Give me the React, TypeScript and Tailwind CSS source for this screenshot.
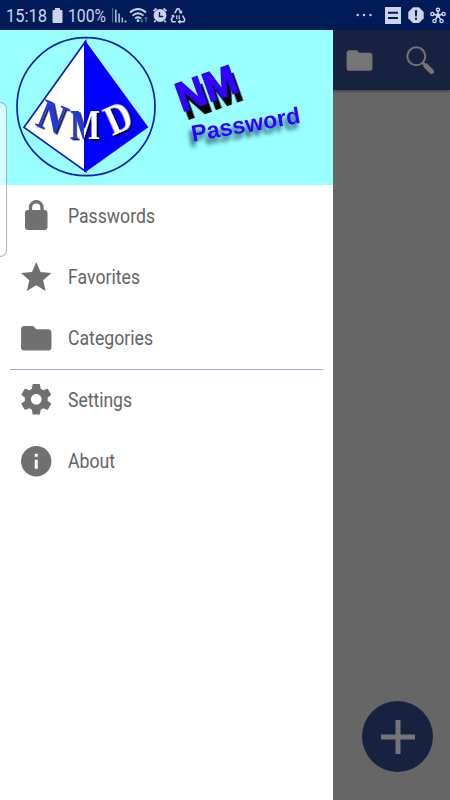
import type { ReactNode } from 'react'

const LOCK = 'M17.400 8.500h-.5V6.900a4.900 4.900 0 0 0-9.800 0v1.600h-.5a2 2 0 0 0-2 2v9.200a2 2 0 0 0 2 2h10.800a2 2 0 0 0 2-2v-9.200a2 2 0 0 0-2-2zM9.300 8.500V6.900a2.700 2.700 0 0 1 5.400 0v1.600z'
const STAR = 'M12 17.27 18.18 21l-1.64-7.03L22 9.24l-7.19-.61L12 2 9.19 8.63 2 9.24l5.46 4.73L5.82 21z'
const FOLDER = 'M10 4H4c-1.1 0-1.99.9-1.99 2L2 18c0 1.1.9 2 2 2h16c1.1 0 2-.9 2-2V8c0-1.1-.9-2-2-2h-8l-2-2z'
const INFO = 'M12 2C6.48 2 2 6.48 2 12s4.48 10 10 10 10-4.48 10-10S17.52 2 12 2zm1 15h-2v-6h2v6zm0-8h-2V7h2v2z'
const GEAR =
  'M19.43 12.98c.04-.32.07-.64.07-.98s-.03-.66-.07-.98l2.11-1.65c.19-.15.24-.42.12-.64l-2-3.46c-.12-.22-.39-.3-.61-.22l-2.49 1c-.52-.4-1.08-.73-1.69-.98l-.38-2.65C14.46 2.18 14.25 2 14 2h-4c-.25 0-.46.18-.49.42l-.38 2.65c-.61.25-1.17.59-1.69.98l-2.49-1c-.23-.09-.49 0-.61.22l-2 3.46c-.13.22-.07.49.12.64l2.11 1.65c-.04.32-.07.65-.07.98s.03.66.07.98l-2.11 1.65c-.19.15-.24.42-.12.64l2 3.46c.12.22.39.3.61.22l2.49-1c.52.4 1.08.73 1.69.98l.38 2.65c.03.24.24.42.49.42h4c.25 0 .46-.18.49-.42l.38-2.65c.61-.25 1.17-.59 1.69-.98l2.49 1c.23.09.49 0 .61-.22l2-3.46c.12-.22.07-.49-.12-.64l-2.11-1.65zM12 15.5c-1.93 0-3.5-1.57-3.5-3.5s1.57-3.5 3.5-3.5 3.5 1.57 3.5 3.5-1.57 3.5-3.5 3.5z'

const mainItems = [
  { label: 'Passwords', icon: LOCK, width: 87 },
  { label: 'Favorites', icon: STAR, width: 72 },
  { label: 'Categories', icon: FOLDER, width: 85 },
]

const moreItems = [
  { label: 'Settings', icon: GEAR, width: 64 },
  { label: 'About', icon: INFO, width: 47 },
]

// Roboto squeezed to the condensed width
function Label({ text, width, className }: { text: string; width: number; className: string }) {
  return (
    <svg width={width} height="28" className={`shrink-0 overflow-visible ${className}`}>
      <text x="0" y="21" textLength={width} lengthAdjust="spacingAndGlyphs" fill="currentColor">
        {text}
      </text>
    </svg>
  )
}

function MenuItem({ label, icon, width }: { label: string; icon: string; width: number }) {
  return (
    <li className="flex h-[61.3px] items-center pl-[18px]">
      <svg viewBox="0 0 24 24" className="size-[36.5px] shrink-0 fill-[#707070]">
        <path d={icon} />
      </svg>
      <Label text={label} width={width} className="ml-[13px] text-[20px] text-[#646464]" />
    </li>
  )
}

function StatusIcon({ width, children }: { width: number; children: ReactNode }) {
  return (
    <svg width={width} height="20" viewBox={`0 0 ${width} 20`} className="shrink-0" fill="#cdd3e8" stroke="none">
      {children}
    </svg>
  )
}

function StatusBar() {
  return (
    <header className="flex h-[30px] items-center justify-between bg-[#001b58] pr-[4px] pl-[6px]">
      <div className="flex items-center">
        <Label text="15:18" width={41} className="text-[19px] text-[#cdd3e8]" />
        <div className="ml-[5px] flex">
          <StatusIcon width={11}>
            <path d="M3 3h5v2h1.500q1 0 1 1v11q0 1-1 1h-8q-1 0-1-1V6q0-1 1-1H3z" />
          </StatusIcon>
        </div>
        <Label text="100%" width={38} className="ml-[5px] text-[19px] text-[#cdd3e8]" />
        <div className="ml-[6px] flex">
          <StatusIcon width={17}>
            <path d="M0 3h1.200v14.500H0z" opacity=".4" />
            <path d="M3 4.500h1.600v13H3zM6.300 8.500h1.600v9H6.300zM9.500 12.500h1.600v5H9.500zM12.500 15.500h2v2h-2z" opacity=".85" />
          </StatusIcon>
          <StatusIcon width={23}>
            <g fill="none" stroke="#cdd3e8" strokeWidth="1.800">
              <path d="M1 7.500q8-7 16 0M3.500 10.600q5.500-4.800 11 0M6.200 13.500q2.800-2.400 5.600 0" />
            </g>
            <circle cx="9" cy="15.700" r="1.400" />
            <path d="M12.800 12.500v4.700m-1.500-1.600 1.500 1.600 1.500-1.600M17 17.200v-5m-1.500 1.600 1.500-1.600 1.500 1.600" fill="none" stroke="#6979aa" />
          </StatusIcon>
          <StatusIcon width={18}>
            <circle cx="8" cy="10.500" r="6.400" />
            <path d="m1.500 6.200 3-2.700M11.500 3.500l3 2.700M3.500 15.500l-1.200 1.700M12.500 15.500l1.200 1.700" stroke="#cdd3e8" strokeWidth="1.700" />
            <path d="M7.500 7v4.500h3.700" fill="none" stroke="#001b58" strokeWidth="1.400" />
          </StatusIcon>
          <StatusIcon width={17}>
            <g fill="none" stroke="#cdd3e8" strokeWidth="1.500">
              <path d="m4.800 8.200 2.400-4.400h1.600l2.300 4M3.300 11l-2 3.600 1 2.100h3.500M12.500 10.500l2.300 4.100-1 2.100H8.500" />
              <path d="m9.200 7.300 2.200.6.500-2.200M1.500 11l2-.7.700 2M10.300 15l-1.800 1.700 1.800 1.600" strokeWidth="1.200" />
              <path d="M6.800 14.300v-4M9.200 10.300v4" strokeWidth="1.200" />
            </g>
          </StatusIcon>
        </div>
      </div>
      <div className="flex items-center">
        <StatusIcon width={30}>
          <circle cx="2.700" cy="10" r="1.200" />
          <circle cx="9" cy="10" r="1.200" />
          <circle cx="15.500" cy="10" r="1.200" />
        </StatusIcon>
        <StatusIcon width={23}>
          <path d="M0 2h16v17H0zM3 6.700v2h10v-2zM3 12v2h10v-2z" fillRule="evenodd" />
        </StatusIcon>
        <StatusIcon width={22}>
          <path d="M5 2.200h6l4.700 4.700v6.300L11 18H5L.3 13.200V6.900z" />
          <path d="M6.800 5.300h2.400l-.4 6.200H7.200zM7 12.700h2v2H7z" fill="#001b58" />
        </StatusIcon>
        <StatusIcon width={16}>
          <g fill="none" stroke="#cdd3e8" strokeWidth="1.400">
            <path d="M8 10.500V5M8 10.500 3 9M8 10.500 13 9M8 10.500l-3 4.500M8 10.500l3 4.500" />
            <circle cx="8" cy="4.800" r="1.600" />
            <circle cx="2.400" cy="9" r="1.600" />
            <circle cx="13.600" cy="9" r="1.600" />
            <circle cx="4.500" cy="16" r="1.600" />
            <circle cx="11.500" cy="16" r="1.600" />
          </g>
          <circle cx="8" cy="10.500" r="2.200" />
        </StatusIcon>
      </div>
    </header>
  )
}

function PyramidLogo() {
  return (
    <svg
      viewBox="0 0 510 465"
      className="h-[155px] w-[170px] shrink-0 font-['Liberation_Serif',serif] text-[128px] font-bold"
    >
      <defs>
        <linearGradient id="split" gradientUnits="userSpaceOnUse" x1="210" x2="302" y1="0" y2="0">
          <stop offset=".47" stopColor="#2337dc" />
          <stop offset=".47" stopColor="#fff" />
        </linearGradient>
        <filter id="letterShadow" x="-20%" y="-20%" width="150%" height="150%">
          <feDropShadow dx="5" dy="4" stdDeviation="2" floodColor="#000" floodOpacity=".9" />
        </filter>
      </defs>
      <circle cx="258" cy="230" r="207" fill="none" stroke="#0a20b0" strokeWidth="5" />
      <path d="M257 34 72 292l185 132z" fill="#fff" stroke="#0a18c0" strokeWidth="5" />
      <path d="M252 34h5l188 258-188 134h-5z" fill="#00f" />
      <g filter="url(#letterShadow)">
        <text x="0" y="0" transform="translate(103 284) rotate(22)" textLength="80" lengthAdjust="spacingAndGlyphs" fill="#2337dc">
          N
        </text>
        <text x="210" y="328" textLength="90" lengthAdjust="spacingAndGlyphs" fill="url(#split)">
          M
        </text>
        <text x="0" y="0" transform="translate(337 318) rotate(-24)" textLength="76" lengthAdjust="spacingAndGlyphs" fill="#fff">
          D
        </text>
      </g>
    </svg>
  )
}

function Wordmark() {
  return (
    <svg
      viewBox="0 -60 489 465"
      className="-ml-[10px] h-[155px] w-[163px] shrink-0 overflow-visible font-['Liberation_Sans',sans-serif] font-bold"
    >
      <defs>
        <filter id="hard" x="-20%" y="-20%" width="150%" height="150%">
          <feDropShadow dx="14" dy="24" stdDeviation="2" floodColor="#000" />
        </filter>
        <filter id="soft" x="-20%" y="-20%" width="150%" height="170%">
          <feDropShadow dx="-7" dy="16" stdDeviation="6" floodColor="#003040" floodOpacity=".8" />
        </filter>
      </defs>
      <g filter="url(#hard)">
        <text
          transform="translate(66 186) rotate(-19.600)"
          textLength="186"
          lengthAdjust="spacingAndGlyphs"
          fill="#3200ff"
          stroke="#3200ff"
          strokeWidth="4"
          className="text-[124px]"
        >
          NM
        </text>
      </g>
      <g filter="url(#soft)">
        <text
          transform="translate(98 275) rotate(-9.800)"
          textLength="331"
          lengthAdjust="spacingAndGlyphs"
          fill="#3200ff"
          className="text-[70px]"
        >
          Password
        </text>
      </g>
    </svg>
  )
}

function Drawer() {
  return (
    <nav className="relative w-[333px] shrink-0 bg-white">
      <div className="flex h-[155px] bg-[#99ffff]">
        <PyramidLogo />
        <Wordmark />
      </div>
      <ul>
        {mainItems.map((item) => (
          <MenuItem key={item.label} {...item} />
        ))}
      </ul>
      <hr className="mr-[10px] -mb-px ml-[10px] h-px border-0 bg-[#a3abdc]" />
      <ul>
        {moreItems.map((item) => (
          <MenuItem key={item.label} {...item} />
        ))}
      </ul>
      {/* Edge panel handle */}
      <div className="absolute top-[72px] left-0 h-[155px] w-[7px] rounded-r-[7px] border border-l-0 border-[#8c9696]/70 bg-white/60" />
    </nav>
  )
}

export default function App() {
  return (
    <div className="flex h-[800px] w-[450px] flex-col overflow-hidden bg-[#666] font-['Roboto',sans-serif]">
      <StatusBar />
      <div className="flex flex-1">
        <Drawer />
        <main className="flex flex-1 flex-col justify-between">
          <div className="flex h-[60px] items-center bg-[#16223f] pl-[11px] shadow-[0_1px_3px_rgba(0,0,0,0.45)]">
            <svg viewBox="0 0 24 24" className="size-[31px] fill-[#757575]">
              <path d={FOLDER} />
            </svg>
            <svg viewBox="0 0 30 30" className="ml-[30px] size-[30px]" fill="none" stroke="#757575">
              <circle cx="11.300" cy="11.300" r="9" strokeWidth="2" />
              <path d="m17.500 17.500 3 3" strokeWidth="2.500" />
              <path d="m21 21 5.500 5.500" strokeWidth="5" strokeLinecap="round" />
            </svg>
          </div>
          <button className="mr-[17px] mb-[28px] flex size-[71px] items-center justify-center self-end rounded-full bg-[#16223f]">
            <svg viewBox="0 0 34 34" className="size-[34px]" stroke="#757575" strokeWidth="5">
              <path d="M17 0v34M0 17h34" />
            </svg>
          </button>
        </main>
      </div>
    </div>
  )
}
